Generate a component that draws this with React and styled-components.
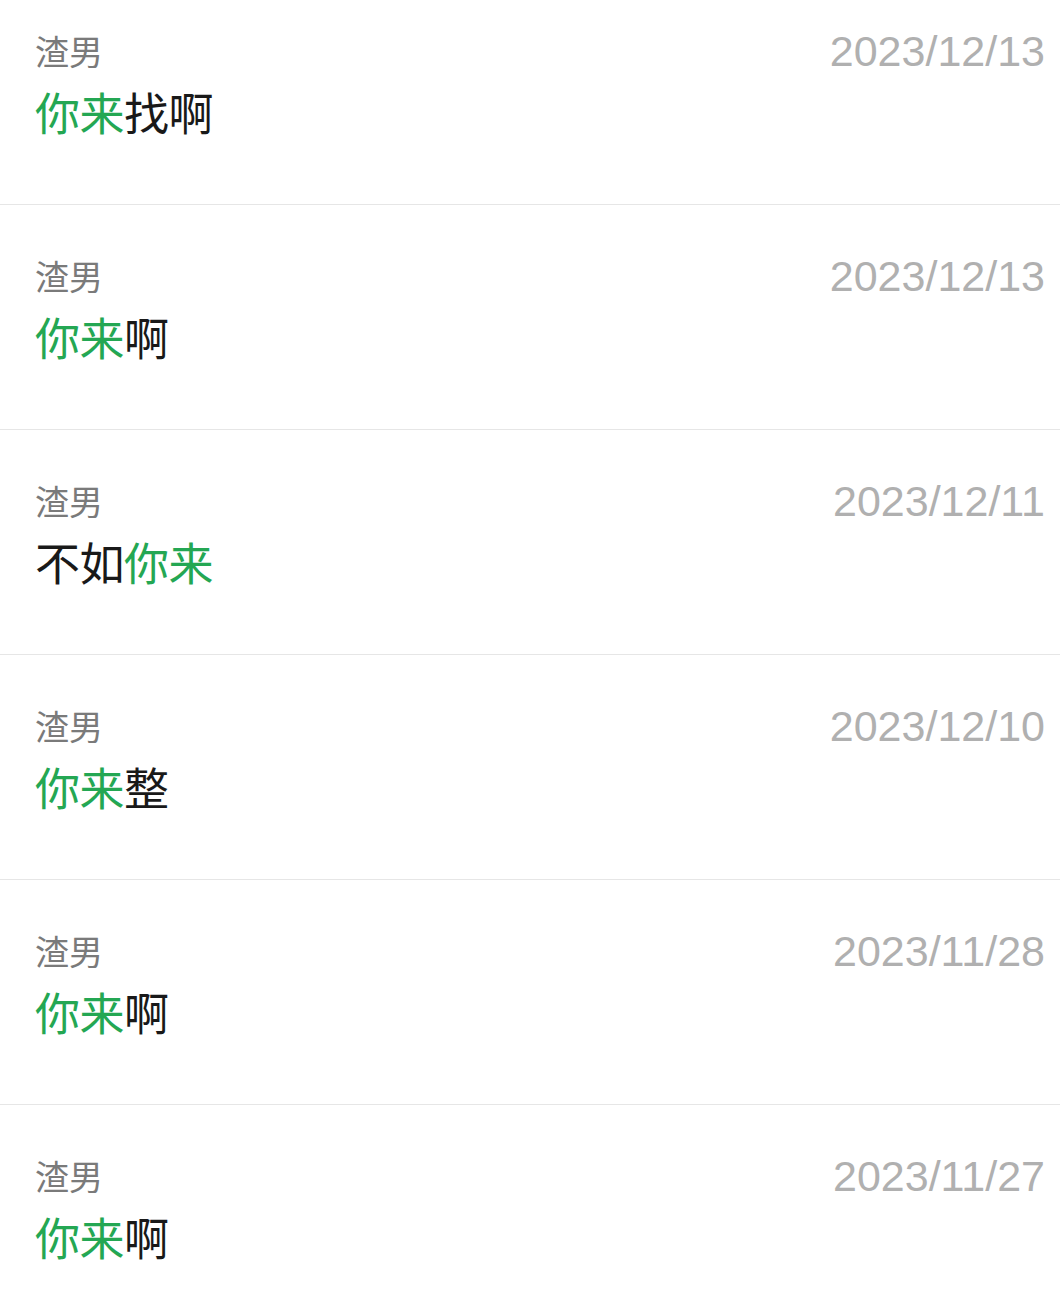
import React from "react";
import styled, { createGlobalStyle } from "styled-components";

const Global = createGlobalStyle`
  html, body { margin: 0; padding: 0; background: #ffffff; }
  body { font-family: "Noto Sans CJK SC", "Noto Sans", sans-serif; }
`;

const List = styled.div`
  display: flex;
  flex-direction: column;
  background: #ffffff;
`;

const Row = styled.div`
  display: grid;
  grid-template-columns: 1fr auto;
  grid-template-rows: 44px 56px;
  row-gap: 11px;
  padding: ${(p) => (p.$first ? 29 : 49)}px 15px 64px 35px;
  border-bottom: 1px solid #e6e6e6;
`;

const Name = styled.div`
  font-family: "Noto Sans CJK SC", sans-serif;
  font-size: 34px;
  line-height: 44px;
  color: #7a7a7a;
`;

const DateText = styled.div`
  font-family: "Liberation Sans", Arial, sans-serif;
  font-size: 43px;
  line-height: 44px;
  color: #b0b0b0;
  text-align: right;
`;

const Message = styled.div`
  grid-column: 1 / span 2;
  font-family: "Noto Sans CJK SC", sans-serif;
  font-size: 45px;
  line-height: 56px;
  color: #191919;
  letter-spacing: -0.5px;
`;

const Hit = styled.span`
  color: #24a753;
`;

const items = [
  { date: "2023/12/13", parts: [["你来", true], ["找啊", false]] },
  { date: "2023/12/13", parts: [["你来", true], ["啊", false]] },
  { date: "2023/12/11", parts: [["不如", false], ["你来", true]] },
  { date: "2023/12/10", parts: [["你来", true], ["整", false]] },
  { date: "2023/11/28", parts: [["你来", true], ["啊", false]] },
  { date: "2023/11/27", parts: [["你来", true], ["啊", false]] },
];

export default function App() {
  return (
    <>
      <Global />
      <List>
        {items.map((it, i) => (
          <Row key={i} $first={i === 0}>
            <Name>渣男</Name>
            <DateText>{it.date}</DateText>
            <Message>
              {it.parts.map(([t, hit], j) =>
                hit ? <Hit key={j}>{t}</Hit> : <span key={j}>{t}</span>
              )}
            </Message>
          </Row>
        ))}
      </List>
    </>
  );
}
